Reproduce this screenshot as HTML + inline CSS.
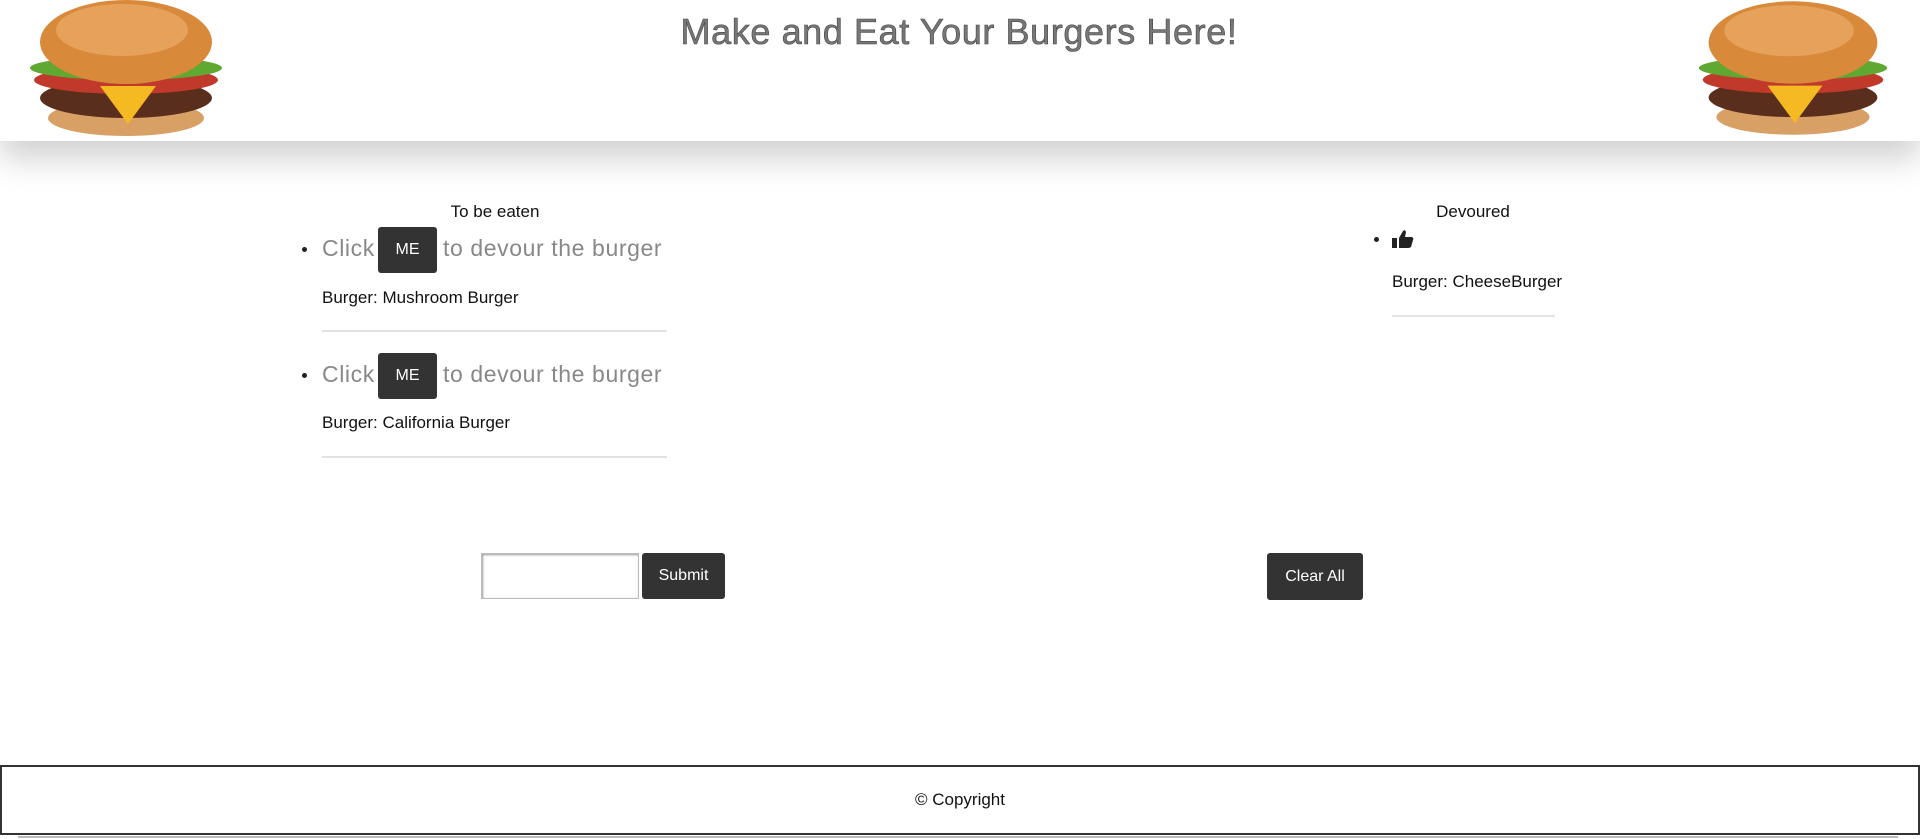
<!DOCTYPE html>
<html><head><meta charset="utf-8"><style>
body{margin:0;width:1920px;height:839px;overflow:hidden;background:#fff;font-family:"Liberation Sans",sans-serif;position:relative}
.abs{position:absolute}
header{position:absolute;left:0;top:0;width:1920px;height:141px;background:#fff;box-shadow:0 18px 30px rgba(0,0,0,.18);}
.title{left:0;width:1918px;top:11px;text-align:center;font-size:36px;color:#777;-webkit-text-stroke:0.6px #444;letter-spacing:0.6px}
.btn{background:#333;color:#fff;border-radius:3px;display:flex;align-items:center;justify-content:center;font-size:16px}
.gray{color:#888;font-size:23px;letter-spacing:.6px}
.small{font-size:17px;color:#111}
.hr{height:2px;background:#e2e2e2}
.dot{width:5px;height:5px;border-radius:50%;background:#222}
</style></head><body>
<header>
<svg class="abs" style="left:18px;top:0" width="215" height="137" viewBox="0 0 215 137">
<ellipse cx="108" cy="118" rx="78" ry="18" fill="#d9a066"/>
<ellipse cx="108" cy="98" rx="86" ry="20" fill="#5a2e1c"/>
<ellipse cx="108" cy="80" rx="92" ry="14" fill="#c0392b"/>
<polygon points="82,86 138,86 110,124" fill="#f5b922"/>
<ellipse cx="108" cy="68" rx="96" ry="12" fill="#5fa832"/>
<ellipse cx="108" cy="42" rx="86" ry="42" fill="#d9893a"/>
<ellipse cx="104" cy="30" rx="66" ry="26" fill="#e6a25a"/>
</svg>
<svg class="abs" style="left:1687px;top:0" width="211" height="137" viewBox="0 0 215 137">
<ellipse cx="108" cy="118" rx="78" ry="18" fill="#d9a066"/>
<ellipse cx="108" cy="98" rx="86" ry="20" fill="#5a2e1c"/>
<ellipse cx="108" cy="80" rx="92" ry="14" fill="#c0392b"/>
<polygon points="82,86 138,86 110,124" fill="#f5b922"/>
<ellipse cx="108" cy="68" rx="96" ry="12" fill="#5fa832"/>
<ellipse cx="108" cy="42" rx="86" ry="42" fill="#d9893a"/>
<ellipse cx="104" cy="30" rx="66" ry="26" fill="#e6a25a"/>
</svg>
<div class="abs title">Make and Eat Your Burgers Here!</div>
</header>

<div class="abs small" style="left:395px;width:200px;text-align:center;top:202px">To be eaten</div>
<div class="abs dot" style="left:302px;top:247px"></div>
<div class="abs gray" style="left:322px;top:235px">Click</div>
<div class="abs btn" style="left:378px;top:227px;width:59px;height:46px">ME</div>
<div class="abs gray" style="left:443px;top:235px">to devour the burger</div>
<div class="abs small" style="left:322px;top:288px">Burger: Mushroom Burger</div>
<div class="abs hr" style="left:322px;top:330px;width:345px"></div>

<div class="abs dot" style="left:302px;top:373px"></div>
<div class="abs gray" style="left:322px;top:361px">Click</div>
<div class="abs btn" style="left:378px;top:353px;width:59px;height:46px">ME</div>
<div class="abs gray" style="left:443px;top:361px">to devour the burger</div>
<div class="abs small" style="left:322px;top:413px">Burger: California Burger</div>
<div class="abs hr" style="left:322px;top:456px;width:345px"></div>

<div class="abs small" style="left:1373px;width:200px;text-align:center;top:202px">Devoured</div>
<div class="abs dot" style="left:1374px;top:237px"></div>
<svg class="abs" style="left:1392px;top:229px" width="22" height="20" viewBox="0 0 22 20"><rect x="0" y="9" width="5" height="10" fill="#222"/><path d="M7 9 L11 2 Q13 0 14 3 L13 8 L20 8 Q22 9 21 11 L19 18 Q18 19 16 19 L7 19 Z" fill="#222"/></svg>
<div class="abs small" style="left:1392px;top:272px">Burger: CheeseBurger</div>
<div class="abs hr" style="left:1392px;top:315px;width:163px"></div>

<div class="abs" style="left:481px;top:553px;width:156px;height:44px;border:1px solid #bbb;box-shadow:inset 1px 1px 2px #999"></div>
<div class="abs btn" style="left:642px;top:553px;width:83px;height:46px">Submit</div>
<div class="abs btn" style="left:1267px;top:553px;width:96px;height:47px">Clear All</div>

<div class="abs" style="left:0;top:765px;width:1916px;height:66px;border:2px solid #333"></div>
<div class="abs small" style="left:0;width:1920px;text-align:center;top:790px">© Copyright</div>
<div class="abs" style="left:18px;top:836px;width:1880px;height:2px;background:#bbb"></div>
</body></html>
